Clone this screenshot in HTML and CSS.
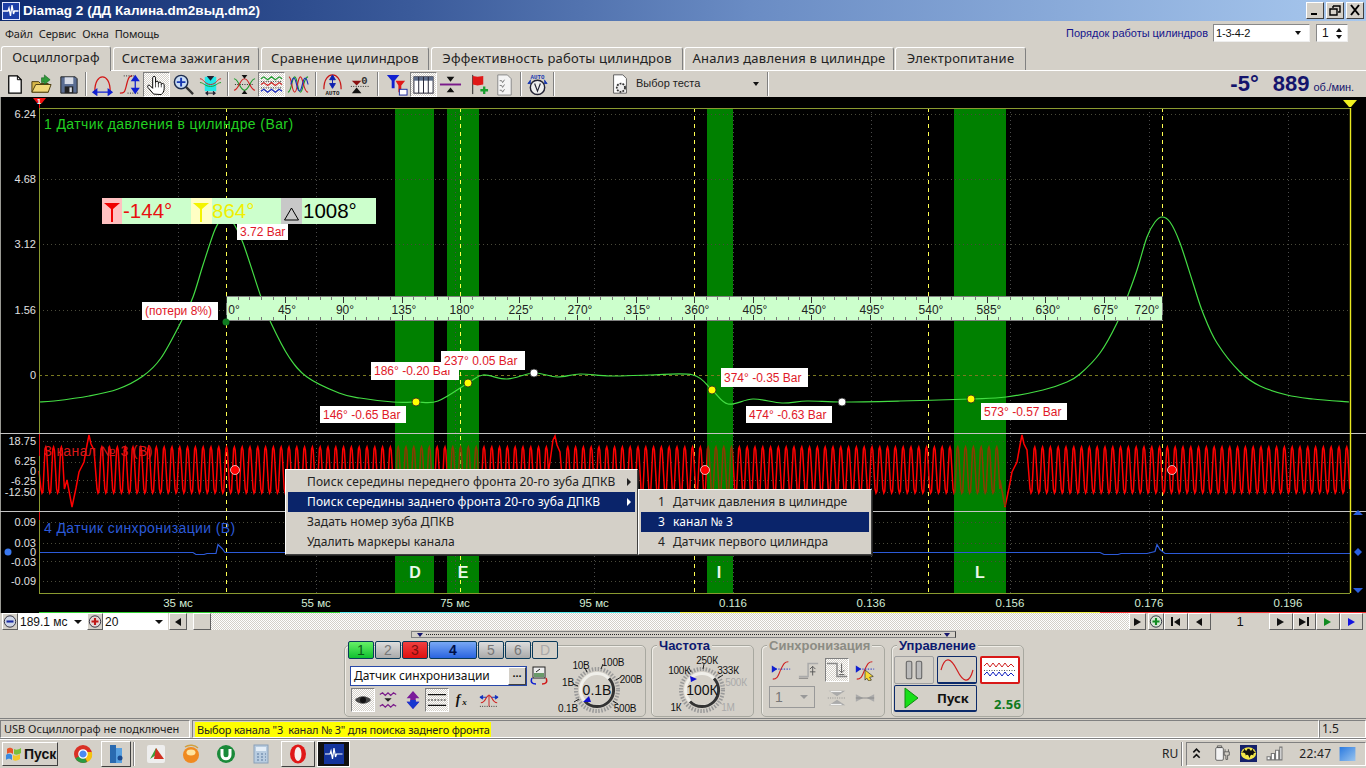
FILE: index.html
```html
<!DOCTYPE html>
<html lang="ru">
<head>
<meta charset="utf-8">
<title>Diamag 2</title>
<link rel="stylesheet" href="styles.css">
</head>
<body>
<div class="app">
  <header class="titlebar">
    <svg class="app-icon" viewBox="0 0 18 18"><rect width="18" height="18" fill="#1c3fa8"/><rect x=".5" y=".5" width="17" height="17" fill="none" stroke="#dfe6ff"/><path d="M1 9h5l1-3 1.500 8 1.500-11 1.500 9 1-3h4" fill="none" stroke="#fff" stroke-width="1.300"/></svg>
    <span class="title-text">Diamag 2 (ДД Калина.dm2выд.dm2)</span>
    <div class="win-btns">
      <span class="win-btn"><svg viewBox="0 0 16 14"><rect x="4" y="10" width="6" height="2"/></svg></span>
      <span class="win-btn"><svg viewBox="0 0 16 14"><path d="M6 3h7v6h-2M3 6h7v6H3z M6 3v2" fill="none" stroke="#000" stroke-width="1.400"/></svg></span>
      <span class="win-btn"><svg viewBox="0 0 16 14"><path d="M4 2l8 10M12 2l-8 10" stroke="#000" stroke-width="2"/></svg></span>
    </div>
  </header>

  <div class="menubar">
    <nav class="menu-items"><span>Файл</span><span>Сервис</span><span>Окна</span><span>Помощь</span></nav>
    <div class="order">
      <span class="order-label">Порядок работы цилиндров</span>
      <span class="combo combo-order">1-3-4-2<i class="arrow"></i></span>
      <span class="combo combo-spin">1<span class="spin"><i class="up"></i><i class="down"></i></span></span>
    </div>
  </div>

  <div class="tabs">
    <span class="tab tab-active">Осциллограф</span>
    <span class="tab tab-a">Система зажигания</span>
    <span class="tab tab-b">Сравнение цилиндров</span>
    <span class="tab tab-c">Эффективность работы цилиндров</span>
    <span class="tab tab-d">Анализ давления в цилиндре</span>
    <span class="tab tab-e">Электропитание</span>
  </div>

  <div class="toolbar">
    <span class="tb"><svg viewBox="0 0 24 24"><path d="M6 3h9l4 4v14H6z" fill="#fff" stroke="#000" stroke-width="1.300"/><path d="M15 3v4h4" fill="none" stroke="#000"/></svg></span>
    <span class="tb"><svg viewBox="0 0 24 24"><path d="M2 9h7l2 2h8v9H2z" fill="#d8b84a" stroke="#4a3c10"/><path d="M2 20l4-8h16l-3 8z" fill="#f2d97a" stroke="#4a3c10"/><path d="M12 10V5h3V2l6 5-6 5V9h-1v1z" fill="#2f9a3a" stroke="#14601c" stroke-width=".6"/></svg></span>
    <span class="tb"><svg viewBox="0 0 24 24"><path d="M4 4h15l2 2v15H4z" fill="#5a6d92" stroke="#222"/><rect x="8" y="4.500" width="9" height="7" fill="#d8dce6"/><rect x="8" y="14" width="9" height="7" fill="#222"/><rect x="13" y="15" width="2.500" height="5" fill="#d8dce6"/></svg></span>
    <i class="sep sep7"></i>
    <span class="tb"><svg viewBox="0 0 24 24"><path d="M4 19C4 9 8 4 12 4s8 5 8 15" fill="none" stroke="#d21818" stroke-width="1.300"/><path d="M2 20h20M2 20l4-3v6zM22 20l-4-3v6z" stroke="#1020d0" fill="#1020d0" stroke-width="1.300"/></svg></span>
    <span class="tb"><svg viewBox="0 0 24 24"><path d="M2 21c5 0 5-1 7-9s3-9 6-9" fill="none" stroke="#d21818" stroke-width="1.300"/><path d="M6 3h12M10 21h12" stroke="#222" stroke-dasharray="1 1.500"/><path d="M18 3v18M18 3l-3.500 5h7zM18 21l-3.500-5h7z" stroke="#1020d0" fill="#1020d0" stroke-width="1.300"/></svg></span>
    <span class="tb tb-pressed"><svg viewBox="0 0 24 24"><path d="M9 22l-6-7c-1-2 1-3 2-2l3 3V5c0-2 3-2 3 0v5c0-2 3-2 3 0v1c0-2 3-2 3 0v1c0-1.500 3-1.500 3 .5v4c0 3-2 5-3 6z" fill="#fff" stroke="#000"/><path d="M11 10v5M14 11v4M17 12v3" stroke="#000" stroke-width=".7"/></svg></span>
    <span class="tb"><svg viewBox="0 0 24 24"><path d="M14 14l8 8" stroke="#333" stroke-width="2.400"/><circle cx="9.500" cy="9.500" r="7" fill="#c8dcf4" stroke="#1c2c50" stroke-width="1.500"/><path d="M9.500 5v9M5 9.500h9" stroke="#1838b0" stroke-width="2"/></svg></span>
    <span class="tb"><svg viewBox="0 0 24 24"><rect x="6" y="4" width="12" height="15" fill="#22e8e8"/><path d="M1 6c4 0 5 6 11 6s7-6 11-6" fill="none" stroke="#d02020"/><path d="M1 10c4 0 5 4 11 4s7-4 11-4" fill="none" stroke="#1a9a2a"/><path d="M8 3h8l-4 5z" fill="#223"/><path d="M7 21h10M7 21l2-2v4zM17 21l-2-2v4z" stroke="#223" fill="#223"/></svg></span>
    <i class="sep sep7"></i>
    <span class="tb"><svg viewBox="0 0 24 24"><path d="M1 6c5 0 6 12 11 12s6-12 11-12" fill="none" stroke="#1a9a2a" stroke-width="1.200"/><path d="M1 18c5 0 6-12 11-12s6 12 11 12" fill="none" stroke="#d02020" stroke-width="1.200"/><path d="M2 12h20" stroke="#222" stroke-dasharray="1 1.500"/><path d="M9 2h6l-3 4zM9 22h6l-3-4z" fill="#111"/></svg></span>
    <span class="tb tb-pressed"><svg viewBox="0 0 24 24" fill="none"><path d="M1 6l3-2 4 3 4-3 4 3 4-3 3 2" stroke="#1a9a2a" stroke-width="1.200"/><path d="M1 12l3-2 4 3 4-3 4 3 4-3 3 2" stroke="#d02020" stroke-width="1.200"/><path d="M1 19l3-2 4 3 4-3 4 3 4-3 3 2" stroke="#1828c0" stroke-width="1.200"/><path d="M1 9h22M1 15.500h22" stroke="#222" stroke-dasharray="1 1.500"/></svg></span>
    <span class="tb"><svg viewBox="0 0 24 24" fill="none"><path d="M1 20C5 20 5 4 8 4s3 16 6 16 3-16 8-16" stroke="#1a9a2a" stroke-width="1.200"/><path d="M2 4c3 0 3 16 6 16s3-16 6-16 3 16 8 16" stroke="#d02020" stroke-width="1.200"/><path d="M4 12c2-9 4-9 6 0s4 9 6 0 4-9 6 0" stroke="#1828c0" stroke-width="1.200"/></svg></span>
    <i class="sep sep7"></i>
    <span class="tb"><svg viewBox="0 0 24 24"><path d="M3 17C3 6 8 2 12 2s9 4 9 15" fill="none" stroke="#c81818" stroke-width="1.300"/><path d="M12 3v12M12 2L9 7h6zM12 16l-3-5h6z" stroke="#1020b0" fill="#1020b0"/><text class="ico-text" x="12" y="22.500">AUTO</text></svg></span>
    <span class="tb"><svg viewBox="0 0 24 24"><text class="ico-zero" x="17" y="11">0</text><path d="M3 14h19" stroke="#222" stroke-dasharray="1 1.500"/><path d="M4 8h10l-5 5z" fill="#8a1010"/><path d="M4 21h10l-5-6z" fill="#111"/></svg></span>
    <i class="sep sep10"></i>
    <span class="tb"><svg viewBox="0 0 24 24"><path d="M2 2h13l-5 6v8H7V8z" fill="#1020d0"/><path d="M11 8h10l-4 5v7h-3v-7z" fill="#e01818"/><rect x="15" y="17" width="8" height="6" fill="#fff" stroke="#1828a0"/></svg></span>
    <span class="tb tb-pressed"><svg viewBox="0 0 24 24"><rect x="2" y="4" width="20" height="17" fill="#fff" stroke="#223"/><rect x="2" y="4" width="20" height="4" fill="#5a6a88"/><path d="M7 4v17M12 4v17M17 4v17" stroke="#223"/></svg></span>
    <span class="tb"><svg viewBox="0 0 24 24"><path d="M1 12h22" stroke="#7a1a8a" stroke-width="2"/><path d="M8 4h8l-4 5zM8 20h8l-4-5z" fill="#111"/></svg></span>
    <span class="tb"><svg viewBox="0 0 24 24"><path d="M7 2v20" stroke="#222"/><path d="M7 3l5 1 6-1v9l-6 1-5-1z" fill="#e01818"/><path d="M15 18h8M19 14v8" stroke="#18a030" stroke-width="2.400"/></svg></span>
    <span class="tb"><svg viewBox="0 0 24 24"><path d="M5 2h10l4 4v17H5z" fill="#f4f4f4" stroke="#888"/><path d="M7 8h2l1 2 2-3M7 13h2l1 2 2-3M7 18h2l1 2 2-3" fill="none" stroke="#777"/></svg></span>
    <i class="sep sep6"></i>
    <span class="tb"><svg viewBox="0 0 24 24"><text class="ico-text ico-blue" x="12" y="6">AUTO</text><path d="M5 7L2 11h3M19 7l3 4h-3" fill="#1838b0" stroke="#1838b0"/><circle cx="12" cy="15" r="7.500" fill="#eee" stroke="#223" stroke-width="1.500"/><path d="M9 11l3 8 3-8" fill="none" stroke="#223" stroke-width="1.200"/></svg></span>
    <i class="sep sep5"></i>
    <span class="test-pick">
      <svg viewBox="0 0 24 24"><path d="M5 2h10l4 4v16H5z" fill="#fff" stroke="#555"/><circle cx="13" cy="16" r="4.500" fill="#eee" stroke="#333" stroke-width="2" stroke-dasharray="2 1.200"/></svg>
      <span class="test-label">Выбор теста</span>
      <i class="arrow"></i>
    </span>
    <i class="sep"></i>
    <div class="rpm"><b class="rpm-big">-5°</b><b class="rpm-big rpm-val">889</b><span class="rpm-unit">об./мин.</span></div>
  </div>

  <main class="plot-wrap">
    <svg class="plot" viewBox="0 97 1366 516" width="1366" height="516">
      <rect x="0" y="97" width="1366" height="516" fill="#000"/>
      <rect x="0" y="97" width="1" height="516" fill="#9a9a94"/>
      <g id="bands" fill="#008000"><rect x="395" y="108" width="39" height="485"/><rect x="447" y="108" width="32" height="485"/><rect x="707" y="108" width="26" height="485"/><rect x="954" y="108" width="52" height="485"/></g>
      <g id="grid"></g>
      <g id="markers"></g>
      <path id="curve" fill="none" stroke="#44dd44" stroke-width="1.200"/>
      <path id="wave" fill="none" stroke="#ff0000" stroke-width="1.500"/>
      <g fill="#008000" opacity=".45"><rect x="395" y="441" width="39" height="65"/><rect x="447" y="441" width="32" height="65"/><rect x="707" y="441" width="26" height="65"/><rect x="954" y="441" width="52" height="65"/></g>
      <path d="M39 552.500H193l3 2h8l3-1h9l2-9 4 4 3 4H1100l4 2h14l3-1h26l8-2 2-7 3 5 5 4H1350" fill="none" stroke="#2c5ad8" stroke-width="1.200"/>

      <g class="frame">
        <path d="M39 108.500H1350M39 593.500H1350M39.500 108V593" stroke="#8a9a30"/>
        <path d="M39.500 433V456M39.500 511V520" stroke="#e01010"/>
        <path d="M0 433.500H1366M0 511.500H1366" stroke="#c4c4c4"/>
        <path d="M1350.500 108V593" stroke="#e8e820" stroke-width="1.400"/>
      </g>
      <path d="M33 98h13l-4 5h-2v5h-1v-5h-2z" fill="#f01010"/><text class="tiny-w" x="39" y="104">1</text>
      <path d="M1343 100h14l-6 7h-2z" fill="#f0f020"/>

      <g class="ax">
        <text x="36" y="118">6.24</text><text x="36" y="183">4.68</text><text x="36" y="248">3.12</text><text x="36" y="314">1.56</text><text x="36" y="379">0</text>
        <text x="36" y="445">18.75</text><text x="36" y="465">6.25</text><text x="36" y="475">0</text><text x="36" y="485">-6.25</text><text x="36" y="496">-12.50</text>
        <text x="36" y="526">0.09</text><text x="36" y="547">0.03</text><text x="36" y="556">0</text><text x="36" y="566">-0.03</text><text x="36" y="585">-0.09</text>
      </g>
      <g class="time">
        <text x="178" y="607">35 мс</text><text x="316" y="607">55 мс</text><text x="455" y="607">75 мс</text><text x="594" y="607">95 мс</text><text x="733" y="607">0.116</text><text x="871" y="607">0.136</text><text x="1010" y="607">0.156</text><text x="1149" y="607">0.176</text><text x="1288" y="607">0.196</text>
      </g>
      <rect x="39" y="612" width="301" height="1" fill="#30d030"/><rect x="340" y="612" width="340" height="1" fill="#50e8e8"/><rect x="680" y="612" width="420" height="1" fill="#f0f040"/><rect x="1100" y="612" width="266" height="1" fill="#f03030"/>

      <text class="ch-label ch-green" x="44" y="129">1 Датчик давления в цилиндре (Bar)</text>
      <text class="ch-label ch-red" x="44" y="456">3 канал № 3 (В)</text>
      <text class="ch-label ch-blue" x="44" y="533">4 Датчик синхронизации (В)</text>

      <g class="band-letters"><text x="415" y="578">D</text><text x="463" y="578">E</text><text x="719" y="578">I</text><text x="980" y="578">L</text></g>

      <g id="ruler">
        <rect x="226.500" y="296.500" width="936" height="24" fill="#ccffcc" stroke="#808080"/>
        <g id="ticks"></g>
        <g class="deg">
          <text x="234" y="314">0°</text><text x="287" y="314">45°</text><text x="345" y="314">90°</text><text x="404" y="314">135°</text><text x="462" y="314">180°</text><text x="521" y="314">225°</text><text x="580" y="314">270°</text><text x="638" y="314">315°</text><text x="697" y="314">360°</text><text x="755" y="314">405°</text><text x="814" y="314">450°</text><text x="872" y="314">495°</text><text x="931" y="314">540°</text><text x="989" y="314">585°</text><text x="1048" y="314">630°</text><text x="1106" y="314">675°</text><text x="1147" y="314">720°</text>
        </g>
      </g>

      <g class="dots">
        <circle cx="226" cy="322" r="3.500" fill="#0f7a20"/>
        <g stroke="#222" stroke-width=".8">
          <circle cx="416" cy="402" r="4" fill="#ffff00"/><circle cx="468" cy="383" r="4" fill="#ffff00"/><circle cx="712" cy="390" r="4" fill="#ffff00"/><circle cx="971" cy="399" r="4" fill="#ffff00"/>
          <circle cx="534" cy="373" r="4" fill="#fff"/><circle cx="842" cy="402" r="4" fill="#fff"/>
        </g>
        <g stroke="#fff" stroke-width=".7">
          <circle cx="235" cy="470" r="4.500" fill="#ff0000"/><circle cx="705" cy="470" r="4.500" fill="#ff0000"/><circle cx="1172" cy="470" r="4.500" fill="#ff0000"/>
        </g>
        <circle cx="8" cy="552" r="3.500" fill="#3a78f0"/>
        <path d="M1358 548l4 4-4 4-4-4zM1353 515l5-5 5 5zM1353 588l5 5 5-5z" fill="#2a60e0"/>
      </g>

      <g class="label">
        <rect x="237" y="224" width="51" height="16"/><text x="240" y="236">3.72 Bar</text>
        <rect x="142" y="302" width="76" height="18"/><text x="145" y="315">(потери 8%)</text>
        <rect x="320" y="406" width="86" height="17"/><text x="323" y="419">146° -0.65 Bar</text>
        <rect x="371" y="362" width="88" height="18"/><text x="374" y="375">186° -0.20 Bar</text>
        <rect x="441" y="351" width="84" height="19"/><text x="444" y="365">237° 0.05 Bar</text>
        <rect x="721" y="368" width="87" height="19"/><text x="724" y="382">374° -0.35 Bar</text>
        <rect x="746" y="406" width="86" height="17"/><text x="749" y="419">474° -0.63 Bar</text>
        <rect x="981" y="403" width="86" height="17"/><text x="984" y="416">573° -0.57 Bar</text>
      </g>

      <g class="info">
        <rect x="102" y="198" width="274" height="26" fill="#ccffcc"/>
        <rect x="102" y="198" width="20" height="26" fill="#ffc0c0"/>
        <rect x="191" y="198" width="21" height="26" fill="#ffffc4"/>
        <rect x="281" y="198" width="21" height="26" fill="#c8c8c8"/>
        <path d="M104 203h16l-7 6v13h-2v-13z" fill="#f00000"/>
        <path d="M193 203h16l-7 6v13h-2v-13z" fill="#f4f400"/>
        <path d="M291.500 208l7 12h-14z" fill="none" stroke="#000"/>
        <text class="i-red" x="123" y="218">-144°</text>
        <text class="i-yel" x="212" y="218">864°</text>
        <text class="i-blk" x="303" y="218">1008°</text>
      </g>
    </svg>

    <div class="popup popup-main">
      <div class="pop-item"><span>Поиск середины переднего фронта 20-го зуба ДПКВ</span><i class="caret"></i></div>
      <div class="pop-item pop-sel"><span>Поиск середины заднего фронта 20-го зуба ДПКВ</span><i class="caret"></i></div>
      <div class="pop-item"><span>Задать номер зуба ДПКВ</span></div>
      <div class="pop-item"><span>Удалить маркеры канала</span></div>
    </div>
    <div class="popup popup-sub">
      <div class="pop-item"><span><em>1</em>Датчик давления в цилиндре</span></div>
      <div class="pop-item pop-sel"><span><em>3</em>канал № 3</span></div>
      <div class="pop-item"><span><em>4</em>Датчик первого цилиндра</span></div>
    </div>
  </main>

  <div class="scrollrow">
    <span class="round-btn"><svg viewBox="0 0 16 16"><circle cx="8" cy="8" r="6.500" fill="#cfd6e6" stroke="#223"/><path d="M4 8h8" stroke="#1828a0" stroke-width="2.400"/></svg></span>
    <span class="sel sel-ms">189.1 мс<i class="arrow"></i></span>
    <span class="round-btn"><svg viewBox="0 0 16 16"><circle cx="8" cy="8" r="6.500" fill="#e6d6d6" stroke="#223"/><path d="M4 8h8M8 4v8" stroke="#c01818" stroke-width="2.400"/></svg></span>
    <span class="sel sel-n">20<i class="arrow"></i></span>
    <span class="sbtn sbtn-l"><i class="tri-l"></i></span>
    <span class="gap-plain"></span>
    <span class="sbtn sbtn-thumb"></span>
    <span class="track"></span>
    <span class="sbtn sbtn-r"><i class="tri-r"></i></span>
    <span class="round-btn round-g"><svg viewBox="0 0 16 16"><circle cx="8" cy="8" r="6.500" fill="#d4e6d4" stroke="#223"/><path d="M4 8h8M8 4v8" stroke="#108a20" stroke-width="2.400"/></svg></span>
    <span class="nbtn"><b class="bar-l"></b><i class="tri-l"></i></span>
    <span class="nbtn"><i class="tri-l"></i></span>
    <span class="page">1</span>
    <span class="nbtn"><i class="tri-r"></i></span>
    <span class="nbtn"><i class="tri-r"></i><b class="bar-r"></b></span>
    <span class="nbtn"><i class="tri-r tri-green"></i></span>
    <span class="nbtn"><i class="tri-r tri-blue"></i></span>
  </div>

  <section class="panel">
    <div class="splitter"><i class="tri-d"></i><span class="dots-line"></span><i class="tri-d"></i></div>
    <div class="groups">
      <div class="group g-chan">
        <div class="chan-col">
          <div class="chan-row">
            <span class="ch ch-on-g">1</span><span class="ch ch-off">2</span><span class="ch ch-on-r">3</span><span class="ch ch-wide">4</span><span class="ch ch-off">5</span><span class="ch ch-off">6</span><span class="ch ch-dis">D</span>
          </div>
          <div class="name-row">
            <span class="name-box">Датчик синхронизации<span class="dots-btn">...</span></span>
            <svg class="ic20" viewBox="0 0 20 20"><rect x="4" y="1" width="12" height="11" fill="#eee" stroke="#222"/><rect x="5" y="7" width="10" height="4" fill="#6a9a6a"/><path d="M7 6l4-3" stroke="#222"/><path d="M3 12c-2 4 0 6 4 6" fill="none" stroke="#1020d0" stroke-width="1.400"/><path d="M17 12c2 4 0 6-4 6" fill="none" stroke="#d01818" stroke-width="1.400"/></svg>
          </div>
          <div class="icon-row">
            <span class="pb tb-pressed"><svg viewBox="0 0 20 20"><path d="M2 10c4-5 12-5 16 0-4 5-12 5-16 0z" fill="#444"/><circle cx="10" cy="10" r="3" fill="#111"/></svg></span>
            <span class="pb pb-f"><svg viewBox="0 0 22 22" fill="none"><path d="M2 5l3-2 3 3 3-3 3 3 3-3 3 2M2 18l3-2 3 3 3-3 3 3 3-3 3 2" stroke="#7a1a8a" stroke-width="1.300"/><path d="M7 9h8l-4 4z" fill="#222"/></svg></span>
            <span class="pb pb-f"><svg viewBox="0 0 22 22"><path d="M11 1l7 8h-4v4h4l-7 8-7-8h4V9H4z" fill="#7a1a9a"/><path d="M11 21l-7-8h4v-2h6v2h4z" fill="#1838d0"/></svg></span>
            <span class="pb tb-pressed"><svg viewBox="0 0 22 22"><path d="M1 5h20M1 17h20" stroke="#111" stroke-width="1.400"/><path d="M1 11h20" stroke="#111" stroke-dasharray="2 1.500"/></svg></span>
            <span class="pb pb-f pb-sp"><svg viewBox="0 0 22 22"><text class="fx" x="2" y="15">f</text><text class="fx fx2" x="9" y="16">x</text></svg></span>
            <span class="pb pb-f"><svg viewBox="0 0 22 22" fill="none"><path d="M2 14c6 0 5-8 9-8s3 8 9 8" stroke="#d02020" stroke-width="1.200"/><path d="M1 8h7M14 8h7M1 8l3-2v4zM21 8l-3-2v4z" stroke="#1030c0" fill="#1030c0"/><path d="M1 18h20" stroke="#222" stroke-dasharray="1 1.500"/><path d="M11 5v13" stroke="#d02020"/></svg></span>
          </div>
        </div>
        <svg class="knob" viewBox="547 645 100 72">
          <circle cx="597" cy="690" r="21" fill="none" stroke="#999" stroke-width="4" stroke-dasharray="1.500 1.500"/>
          <circle cx="597" cy="690" r="16.500" fill="none" stroke="#f0efea" stroke-width="3"/>
          <path d="M609 678.500A16.500 16.500 0 0 1 585 701.500" fill="none" stroke="#333" stroke-width="3"/>
          <path d="M574 702l5-3M573 684l5 2M585 668l2 4M603 664l-2 5M621 677l-5 3M618 704l-5-3" stroke="#222"/>
          <path d="M583 702l6-6 2 6z" fill="#1010d0"/>
          <text class="kb" x="597" y="695">0.1В</text>
          <g class="ks"><text x="568" y="712">0.1В</text><text x="568" y="686">1В</text><text x="581" y="669">10В</text><text x="613" y="666">100В</text><text x="631" y="683">200В</text><text x="625" y="712">500В</text></g>
        </svg>
      </div>

      <div class="group g-freq">
        <span class="g-title">Частота</span>
        <svg class="knob" viewBox="651 645 102 72">
          <circle cx="701" cy="690" r="21" fill="none" stroke="#999" stroke-width="4" stroke-dasharray="1.500 1.500"/>
          <circle cx="701" cy="690" r="16.500" fill="none" stroke="#f0efea" stroke-width="3"/>
          <path d="M713 678.500A16.500 16.500 0 0 1 689 701.500" fill="none" stroke="#333" stroke-width="3"/>
          <path d="M688 668l2 4M703 664l-1 5M722 675l-5 3" stroke="#222"/>
          <path d="M724 685l-5 1M721 704l-5-3" stroke="#aaa"/>
          <path d="M689 676l7 3-6 3z" fill="#1010d0"/>
          <text class="kb" x="701" y="695">100К</text>
          <g class="ks"><text x="678" y="674">100К</text><text x="706" y="664">250К</text><text x="727" y="674">333К</text><text class="ks-off" x="735" y="686">500К</text><text class="ks-off" x="727" y="711">1М</text><text x="675" y="711">1К</text></g>
        </svg>
      </div>

      <div class="group g-sync">
        <span class="g-title g-title-off">Синхронизация</span>
        <div class="sync-grid">
          <span class="sy"><svg viewBox="0 0 24 24" fill="none"><path d="M3 22c6 0 6-5 9-11s4-8 8-8" stroke="#d02020" stroke-width="1.200"/><path d="M3 11h19" stroke="#1020d0" stroke-dasharray="1.500 1.500"/><path d="M2 7l6 4-6 4z" fill="#1020d0"/></svg></span>
          <span class="sy"><svg viewBox="0 0 24 24" fill="none"><path d="M1 19h10V5h11" stroke="#aaa" stroke-width="1.600"/><path d="M1 21h10" stroke="#777"/><path d="M16 8v10M13 11l3-3 3 3" stroke="#555"/><path d="M13 14h6" stroke="#555"/></svg></span>
          <span class="sy tb-pressed"><svg viewBox="0 0 24 24" fill="none"><path d="M1 5h11v14h11" stroke="#888" stroke-width="1.600"/><path d="M17 5v10M14 12l3 3 3-3M14 17h6" stroke="#555"/></svg></span>
          <span class="sy"><svg viewBox="0 0 24 24" fill="none"><path d="M3 22c6 0 6-5 9-11s4-8 8-8" stroke="#d02020" stroke-width="1.200"/><path d="M3 11h19" stroke="#1020d0" stroke-dasharray="1.500 1.500"/><path d="M2 7l6 4-6 4z" fill="#1020d0"/><path d="M12 12l9 7-4 1 2 3-3 1-2-3-2 2z" fill="#f8d830" stroke="#222" stroke-width=".7"/></svg></span>
          <span class="sy-combo">1<i class="arrow arrow-off"></i></span>
          <span class="sy sy-last"><svg viewBox="0 0 24 24"><path d="M2 12h20" stroke="#888" stroke-dasharray="1 1.500"/><path d="M3 4h18l-9 6zM3 20h18l-9-6z" fill="#aaa"/><path d="M5 5h12M5 19h12" stroke="#fff"/></svg></span>
          <span class="sy"><svg viewBox="0 0 24 24"><path d="M2 8l8 4-8 4zM22 8l-8 4 8 4z" fill="#aaa"/><path d="M2 12h20" stroke="#888"/></svg></span>
        </div>
      </div>

      <div class="group g-ctrl">
        <span class="g-title">Управление</span>
        <div class="ctrl-top">
          <span class="cb cb-flat"><svg viewBox="0 0 30 20"><rect x="8" y="2" width="5" height="16" rx="1.500" fill="#bbb" stroke="#666"/><rect x="17" y="2" width="5" height="16" rx="1.500" fill="#bbb" stroke="#666"/></svg></span>
          <span class="cb cb-blue"><svg viewBox="0 0 36 22"><path d="M2 11C6-4 12-1 18 11s12 15 16 0" fill="none" stroke="#d02020" stroke-width="1.200"/></svg></span>
          <span class="cb cb-red"><svg viewBox="0 0 36 22" fill="none"><path d="M2 7l3-3 3 4 3-4 3 4 3-4 3 4 3-4 3 4 3-3 3 3" stroke="#d02020"/><path d="M2 16l3-3 3 4 3-4 3 4 3-4 3 4 3-4 3 4 3-3 3 3" stroke="#1020c0"/><path d="M2 11.500h32" stroke="#555" stroke-dasharray="1 1.500"/></svg></span>
        </div>
        <div class="ctrl-bot">
          <span class="start"><svg viewBox="0 0 16 24"><path d="M2 2l13 10L2 22z" fill="#18e018" stroke="#108a10"/></svg><b>Пуск</b></span>
          <b class="time-val">2.56</b>
        </div>
      </div>
    </div>
  </section>

  <footer class="status">
    <span class="st st-a">USB Осциллограф не подключен</span>
    <span class="st st-b"><mark class="hl">Выбор канала "3&nbsp; канал № 3" для поиска заднего фронта</mark></span>
    <span class="st st-c">1.5</span>
  </footer>

  <div class="taskbar">
    <span class="start-btn"><svg viewBox="0 0 18 18"><path d="M2 4c3-2 4-1 6 0v5c-2-1-3-2-6 0z" fill="#e8562a"/><path d="M9 4c2 1 4 1 7-1v5c-3 2-5 2-7 1z" fill="#7cc03a"/><path d="M1 10c3-2 4-1 6 0v5c-2-1-3-2-6 0z" fill="#3a8ae0"/><path d="M8 10c2 1 4 1 7-1v5c-3 2-5 2-7 1z" fill="#f4c82a"/></svg><b>Пуск</b></span>
    <span class="tk tk-chrome"><svg viewBox="0 0 20 20"><circle cx="10" cy="10" r="9" fill="#d93025"/><path d="M10 10L2.200 14.500A9 9 0 0 0 14 18z" fill="#2a9a42"/><path d="M10 10l4.500 8A9 9 0 0 0 18.800 8H10z" fill="#f4c20d"/><circle cx="10" cy="10" r="4.200" fill="#4a8af0" stroke="#fff" stroke-width="1.200"/></svg></span>
    <span class="tk tk-press tk-w30"><svg viewBox="0 0 20 20"><path d="M4 1h6v18H4z" fill="#2a6ab0"/><path d="M10 4h6v15h-6z" fill="#58a0e0"/><circle cx="14" cy="14" r="2.500" fill="#1a4a90"/></svg></span>
    <i class="tk-sep"></i>
    <span class="tk tk-a"><svg viewBox="0 0 20 20"><rect x="1" y="1" width="18" height="18" rx="2" fill="#eee"/><path d="M4 15L10 4l3 5z" fill="#3aa03a"/><path d="M10 4l8 11H8z" fill="#d03020"/></svg></span>
    <span class="tk tk-b"><svg viewBox="0 0 20 20"><circle cx="10" cy="11" r="8" fill="#f08a20"/><ellipse cx="10" cy="8.500" rx="4.500" ry="3" fill="#ffe4a0"/><path d="M4 3c4-3 10-2 13 1" fill="none" stroke="#d0a040" stroke-width="1.500"/></svg></span>
    <span class="tk tk-b"><svg viewBox="0 0 20 20"><circle cx="10" cy="10" r="9" fill="#1a8a3a"/><path d="M6 5v6c0 5 8 5 8 0V5" fill="none" stroke="#fff" stroke-width="3"/></svg></span>
    <span class="tk tk-b"><svg viewBox="0 0 20 20"><rect x="3" y="1" width="14" height="18" fill="#b8cce0" stroke="#8aa0b8"/><rect x="5" y="3" width="10" height="4" fill="#e4eef8"/><path d="M6 10h2M10 10h2M14 10h1M6 13h2M10 13h2M14 13h1M6 16h2M10 16h2M14 16h1" stroke="#7a94b4" stroke-width="1.600"/></svg></span>
    <span class="tk tk-press tk-w34"><svg viewBox="0 0 20 20"><ellipse cx="10" cy="10" rx="8" ry="9.500" fill="#e01818"/><ellipse cx="10" cy="10" rx="3.500" ry="7" fill="#f6f0ee"/></svg></span>
    <span class="tk tk-active"><svg viewBox="0 0 20 20"><rect width="20" height="20" fill="#14349c"/><path d="M1 10h5l1-3 1.500 8 1.500-11 1.500 9 1-3h6" fill="none" stroke="#fff" stroke-width="1.200"/></svg></span>
    <span class="tray-lang">RU</span>
    <i class="tray-sep"></i>
    <div class="tray">
      <svg class="tray-ic" viewBox="0 0 16 16" fill="none"><path d="M5 7l3-3 3 3M5 12l3-3 3 3" stroke="#111" stroke-width="1.500"/></svg>
      <svg class="tray-ic" viewBox="0 0 18 20" fill="none"><rect x="1" y="3" width="9" height="15" rx="1.500" stroke="#555" fill="#f2f2f2"/><path d="M3 1h5v2H3zM11 8h6v4h-2v5h-2v-5h-2zM12 8V5M16 8V5" stroke="#555"/></svg>
      <svg class="tray-ic" viewBox="0 0 18 18"><rect width="18" height="18" fill="#14206a"/><ellipse cx="9" cy="9" rx="8" ry="6.500" fill="#f4e84a"/><path d="M1 8c3-1 3-3 4-4 0 2 2 2 2 2l1-2h2l1 2s2 0 2-2c1 1 1 3 4 4-2 0-3 1-3 3-1-1-2-1-3 0l-1 3-1-3c-1-1-2-1-3 0 0-2-1-3-3-3z" fill="#111"/></svg>
      <svg class="tray-ic" viewBox="0 0 16 16"><path d="M1 14V11h3v3zM5 14V8h3v6zM9 14V5h3v9zM13 14V2h2v12z" fill="#fff" stroke="#777"/></svg>
      <span class="clock">22:47</span>
      <svg class="tray-desk" viewBox="0 0 17 15"><defs><linearGradient id="desk" x1="0" y1="0" x2="1" y2="1"><stop offset="0" stop-color="#2a7ae0"/><stop offset="1" stop-color="#9ac4ee"/></linearGradient></defs><rect width="17" height="15" fill="url(#desk)"/></svg>
    </div>
  </div>
</div>
<script src="app.js"></script>
</body>
</html>
```

FILE: styles.css
```css
* { box-sizing: border-box; }
html, body { margin: 0; padding: 0; }
body { background: #d4d0c8; overflow: hidden; }
i { display: block; font-style: normal; }

.app {
  width: 1366px; height: 768px; display: flex; flex-direction: column;
  background: #d4d0c8; color: #111; overflow: hidden;
  font: 12px/16px "Noto Sans", "Liberation Sans", sans-serif;
}

/* title bar */
.titlebar {
  height: 21px; flex: none; display: flex; align-items: center; padding: 0 2px 0 2px;
  background: linear-gradient(90deg, #0e2a6e 0%, #3a5a9a 30%, #6a8cc4 55%, #a8c8ee 100%);
}
.app-icon { width: 18px; height: 18px; }
.title-text { margin-left: 3px; color: #fff; font: bold 13.5px/20px "Liberation Sans", sans-serif; letter-spacing: .05px; }
.win-btns { margin-left: auto; display: flex; gap: 2px; }
.win-btn {
  width: 18px; height: 17px; background: #d4d0c8; display: block;
  border: 1px solid; border-color: #fff #404040 #404040 #fff;
}
.win-btn svg { display: block; width: 16px; height: 14px; }

/* menu row */
.menubar { height: 24px; flex: none; display: flex; align-items: center; padding-left: 5px; }
.menu-items { display: flex; gap: 6px; font-size: 11px; color: #222; margin-top: 2px; letter-spacing: -.15px; }
.order { margin-left: auto; display: flex; align-items: center; margin-right: 18px; }
.order-label { color: #14148c; font: 11px/16px "Liberation Sans", sans-serif; letter-spacing: -.02px; margin-right: 5px; }
.combo { height: 18px; background: #fff; display: flex; align-items: center; position: relative; font: 11px/16px "Liberation Sans", sans-serif; letter-spacing: -.2px; padding-left: 2px; border: 1px solid #888; border-color: #888 #eee #eee #888; }
.combo-order { width: 97px; }
.combo-spin { width: 32px; margin-left: 6px; font-size: 12px; padding-left: 5px; }
.arrow { width: 0; height: 0; border: 3.5px solid transparent; border-top: 4px solid #111; border-bottom: 0; margin-left: auto; margin-right: 8px; }
.spin { margin-left: auto; margin-right: 5px; display: flex; flex-direction: column; gap: 3px; }
.up { width: 0; height: 0; border: 3px solid transparent; border-bottom: 4px solid #111; border-top: 0; }
.down { width: 0; height: 0; border: 3px solid transparent; border-top: 4px solid #111; border-bottom: 0; }

/* tabs */
.tabs { height: 25px; flex: none; display: flex; align-items: flex-end; padding-left: 1px; position: relative; z-index: 1; }
.tab {
  height: 23px; display: flex; align-items: center; justify-content: center; padding-bottom: 3px;
  margin-right: 2px;
  border: 1px solid; border-bottom: 0; border-color: #fff #808080 #808080 #fff; border-radius: 3px 3px 0 0;
  font-size: 13px; line-height: 18px; color: #222; letter-spacing: .25px;
}
.tab-active { width: 110px; height: 25px; background: #d4d0c8; margin-bottom: -1px; letter-spacing: .15px; padding-bottom: 4px; }
.tab-a { width: 146px; }
.tab-b { width: 168px; }
.tab-c { width: 252px; margin-right: 1px; }
.tab-d { width: 210px; margin-right: 1px; }
.tab-e { width: 131px; }

/* toolbar */
.toolbar { height: 27px; flex: none; display: flex; align-items: center; border-top: 1px solid #fff; padding-left: 1px; }
.tb { width: 27px; height: 25px; display: flex; align-items: center; justify-content: center; flex: none; }
.tb svg { width: 23px; height: 23px; }
.tb-pressed {
  background-color: #d4d0c8;
  background-image: conic-gradient(#fff 25%, #d4d0c8 0 50%, #fff 0 75%, #d4d0c8 0);
  background-size: 2px 2px;
  border: 1px solid; border-color: #808080 #fff #fff #808080;
}
.sep { width: 2px; height: 24px; flex: none; background: linear-gradient(90deg, #808080 50%, #fff 50%); margin: 0 2px; }
.sep5 { margin: 0 2px; }
.sep6 { margin: 0 2px; }
.sep7 { margin: 0 2.5px; }
.sep10 { margin: 0 4px; }
.ico-text { font: bold 6px "Liberation Mono", monospace; text-anchor: middle; fill: #222; }
.ico-blue { fill: #1838b0; }
.ico-zero { font: bold 11px "Liberation Mono", monospace; text-anchor: middle; fill: #333; }
.test-pick { width: 208px; height: 25px; display: flex; align-items: center; padding-left: 52px; margin-left: 0; }
.test-pick svg { width: 22px; height: 22px; flex: none; }
.test-label { margin-left: 5px; font: 11px/16px "Liberation Sans", sans-serif; color: #222; margin-top: -2px; }
.test-pick .arrow { margin-right: 6px; }
.rpm { margin-left: auto; display: flex; align-items: baseline; color: #14146c; margin-right: 12px; }
.rpm-big { font: bold 22px/24px "Liberation Sans", sans-serif; }
.rpm-val { margin-left: 14px; }
.rpm-unit { font: 11px/16px "Liberation Sans", sans-serif; margin-left: 4px; color: #14146c; letter-spacing: -.1px; }

/* plot */
.plot-wrap { height: 516px; flex: none; position: relative; background: #000; }
.plot { display: block; }
.ax text { font: 11px "Liberation Sans", sans-serif; fill: #e0e0e0; text-anchor: end; }
.time text { font: 11.5px "Liberation Sans", sans-serif; fill: #d4ecd4; text-anchor: middle; }
.tiny-w { font: bold 8px "Liberation Sans", sans-serif; fill: #fff; text-anchor: middle; }
.ch-label { font: 14px "Liberation Sans", sans-serif; letter-spacing: .4px; }
.ch-green { fill: #22d022; }
.ch-red { fill: #d81818; }
.ch-blue { fill: #2c5ad8; }
.band-letters text { font: bold 16px "Liberation Sans", sans-serif; fill: #eaf8ea; text-anchor: middle; }
.deg text { font: 12px "Liberation Sans", sans-serif; fill: #222; text-anchor: middle; }
.label rect { fill: #fff; }
.label text { font: 12px "Liberation Sans", sans-serif; fill: #e01828; }
.info text { font: 20.5px "Liberation Sans", sans-serif; }
.i-red { fill: #e81010; }
.i-yel { fill: #f0f000; }
.i-blk { fill: #000; }

/* context menus */
.popup {
  position: absolute; background: #d4d0c8; padding: 2px;
  border: 1px solid; border-color: #fff #404040 #404040 #fff;
  box-shadow: 1px 1px 0 #222;
}
.popup-main { left: 285px; top: 372px; width: 353px; }
.popup-sub { left: 638px; top: 392px; width: 234px; }
.pop-item { height: 20px; display: flex; align-items: center; padding-left: 19px; font-size: 12px; color: #222; letter-spacing: .09px; white-space: nowrap; }
.popup-sub .pop-item { padding-left: 17px; }
.pop-item em { font-style: normal; width: 15px; display: inline-block; }
.pop-sel { background: #0a246a; color: #fff; }
.caret { width: 0; height: 0; margin-left: auto; margin-right: 4px; border: 4px solid transparent; border-left: 4px solid #222; border-right: 0; }
.pop-sel .caret { border-left-color: #fff; }

/* scroll row */
.scrollrow { height: 17px; flex: none; display: flex; align-items: stretch; padding-left: 2px; }
.round-btn { width: 16px; background: #d4d0c8; display: block; border: 1px solid; border-color: #fff #606060 #606060 #fff; flex: none; }
.round-btn svg { display: block; width: 14px; height: 15px; }
.sel { background: #fff; display: flex; align-items: center; font: 12px/16px "Liberation Sans", sans-serif; padding-left: 2px; flex: none; }
.sel-ms { width: 69px; }
.sel-n { width: 65px; }
.sel .arrow { border-width: 4px; border-top-width: 4px; margin-right: 5px; }
.sbtn { width: 18px; background: #d4d0c8; display: flex; align-items: center; justify-content: center; border: 1px solid; border-color: #fff #606060 #606060 #fff; flex: none; }
.sbtn-l { margin-left: 1px; }
.gap-plain { width: 6px; flex: none; background: #e4e2dc; }
.sbtn-r { width: 17px; }
.track {
  width: 918px; flex: none;
  background-color: #d4d0c8;
  background-image: conic-gradient(#fff 25%, #d4d0c8 0 50%, #fff 0 75%, #d4d0c8 0);
  background-size: 2px 2px;
}
.round-g { margin-left: 2px; }
.nbtn { width: 23.500px; background: #d4d0c8; display: flex; align-items: center; justify-content: center; border: 1px solid; border-color: #fff #606060 #606060 #fff; flex: none; }
.page { width: 58px; text-align: center; font: 13px/17px "Liberation Sans", sans-serif; flex: none; }
.tri-l { width: 0; height: 0; border: 4.5px solid transparent; border-right: 6px solid #111; border-left: 0; }
.tri-r { width: 0; height: 0; border: 4.5px solid transparent; border-left: 7px solid #111; border-right: 0; }
.tri-green { border-left-color: #108a20; }
.tri-blue { border-left-color: #1414e0; }
.bar-l, .bar-r { display: block; width: 2px; height: 9px; background: #111; }
.bar-l { margin-right: 1px; }
.bar-r { margin-left: 1px; }

/* control panel */
.panel { height: 89px; flex: none; display: flex; flex-direction: column; border-bottom: 1px solid #808080; }
.splitter { height: 7px; width: 545px; margin: 1px 0 0 411px; display: flex; align-items: center; gap: 3px; padding: 0 5px; background: #d4d0c8; border: 1px solid; border-color: #808080 #404040 #808080 #808080; flex: none; }
.tri-d { width: 0; height: 0; border: 3.5px solid transparent; border-top: 4px solid #14146c; border-bottom: 0; }
.dots-line { flex: 1; border-top: 1px dotted #222; }
.groups { display: flex; margin: 7px 0 0 344px; height: 72px; }
.group { position: relative; height: 72px; border: 1px solid #a8a8a0; border-radius: 5px; box-shadow: inset 1px 1px 0 #f0eee8; flex: none; }
.g-title { position: absolute; left: 5px; top: -8px; padding: 0 2px; background: #d4d0c8; font: bold 13px/15px "Liberation Sans", sans-serif; color: #0c1a70; }
.g-title-off { color: #8c8c84; }

.g-chan { width: 302px; display: flex; }
.chan-col { width: 202px; padding-left: 5px; margin-top: -5px; flex: none; }
.chan-row { display: flex; height: 18px; gap: 1px; margin-left: -2px; }
.ch { width: 26px; height: 18px; flex: none; display: flex; align-items: center; justify-content: center; border: 1px solid #0a3a5a; border-radius: 2px; font: 14px/16px "Liberation Sans", sans-serif; color: #666; background: linear-gradient(#ddd, #aaa); }
.ch-on-g { background: linear-gradient(#66f066, #10c030); color: #0a5a1a; }
.ch-on-r { background: linear-gradient(#f04040, #e01010); color: #7a1010; }
.ch-wide { width: 48px; background: linear-gradient(#78a8f4, #2a64e0); color: #00104a; font-weight: bold; }
.ch-off { color: #777; }
.ch-dis { color: #aaa; background: #d4d0c8; }
.name-row { display: flex; align-items: center; margin-top: 7px; height: 20px; }
.name-box { width: 177px; height: 20px; flex: none; background: #fff; border: 1px solid #2848a8; display: flex; align-items: center; font-size: 12px; padding-left: 3px; color: #111; }
.dots-btn { margin-left: auto; width: 18px; height: 18px; background: #d4d0c8; border: 1px solid; border-color: #fff #404040 #404040 #fff; font: bold 11px/10px "Liberation Sans", sans-serif; text-align: center; }
.ic20 { width: 20px; height: 20px; margin-left: 2px; flex: none; }
.icon-row { display: flex; align-items: center; margin-top: 2px; height: 24px; margin-left: 1px; }
.pb { width: 24px; height: 24px; display: flex; align-items: center; justify-content: center; flex: none; }
.pb svg { width: 20px; height: 20px; }
.pb-f { width: 25px; }
.pb-sp { margin-left: 2px; }
.fx { font: italic bold 15px "Liberation Serif", serif; fill: #111; }
.fx2 { font-size: 10px; }
.knob { width: 100px; height: 72px; flex: none; margin-top: -1px; }
.kb { font: 14px "Liberation Sans", sans-serif; text-anchor: middle; fill: #111; }
.ks text { font: 10px "Liberation Sans", sans-serif; text-anchor: middle; fill: #111; letter-spacing: -.2px; }
.ks .ks-off { fill: #aaa; }

.g-freq { width: 103px; margin-left: 5px; }
.g-freq .knob { width: 102px; display: block; }
.g-sync { width: 124px; margin-left: 7px; }
.sync-grid { display: grid; grid-template-columns: 24px 24px 24px 24px; column-gap: 4px; grid-auto-rows: 24px; padding: 12px 0 0 7px; row-gap: 4px; }
.sy { width: 24px; height: 24px; display: flex; align-items: center; justify-content: center; }
.sy svg { width: 22px; height: 22px; }
.sy-combo { grid-column: 1 / span 2; width: 46px; height: 22px; display: flex; align-items: center; padding-left: 5px; border: 1px solid #999; color: #777; font: 14px/16px "Liberation Sans", sans-serif; }
.arrow-off { border-top-color: #999; border-width: 4px; margin-right: 6px; }
.sy-last { grid-column: 3; }
.g-ctrl { width: 133px; margin-left: 6px; padding: 10px 0 0 2px; }
.ctrl-top { display: flex; gap: 3px; }
.cb { width: 40px; height: 28px; display: flex; align-items: center; justify-content: center; border-radius: 2px; }
.cb svg { width: 36px; height: 22px; }
.cb-flat { border: 1px solid #a0a0a0; }
.cb-blue { border: 1px solid #0c2a6a; border-bottom-width: 2px; }
.cb-red { border: 2px solid #d81818; background: #fff; }
.ctrl-bot { display: flex; align-items: flex-end; margin-top: 1px; }
.start { width: 83px; height: 27px; display: flex; align-items: center; border: 1px solid #0c2a6a; border-radius: 2px; border-bottom-width: 2px; padding-left: 8px; }
.start svg { width: 16px; height: 24px; }
.start b { font: bold 13px/16px "Noto Sans", sans-serif; margin-left: 18px; color: #111; }
.time-val { font: bold 13px/15px "Noto Sans", sans-serif; color: #107a20; margin-left: 17px; letter-spacing: .3px; }

/* status bar */
.status { height: 20px; flex: none; display: flex; padding-top: 1px; border-bottom: 1px solid #808080; }
.st { height: 18px; display: flex; align-items: center; border: 1px solid; border-color: #808080 #fff #fff #808080; font-size: 11px; padding-left: 3px; color: #222; white-space: nowrap; }
.st-a { width: 190px; }
.st-b { width: 1127px; margin-left: 2px; padding-left: 2px; }
.st-c { width: 47px; margin-left: 0; padding-left: 2px; font-size: 12px; }
.hl { background: #ffff00; color: #222; padding: 0 1px 0 2px; line-height: 15px; letter-spacing: -.2px; }

/* taskbar */
.taskbar { height: 28px; flex: none; display: flex; align-items: center; border-top: 1px solid #fff; padding-left: 2px; }
.start-btn { width: 56px; height: 24px; display: flex; align-items: center; padding-left: 2px; border: 1px solid; border-color: #fff #404040 #404040 #fff; flex: none; }
.start-btn svg { width: 18px; height: 18px; }
.start-btn b { font: bold 14px/16px "Liberation Sans", sans-serif; margin-left: 1px; }
.tk { height: 26px; display: flex; align-items: center; justify-content: center; flex: none; }
.tk svg { width: 20px; height: 20px; }
.tk-chrome { width: 20px; margin-left: 15px; }
.tk-press { border: 1px solid; border-color: #fff #404040 #404040 #fff; }
.tk-w30 { width: 30px; margin-left: 8px; }
.tk-sep { width: 2px; height: 24px; background: linear-gradient(90deg, #808080 50%, #fff 50%); margin: 0 6px 0 2px; flex: none; }
.tk-a { width: 20px; margin-left: 5px; }
.tk-b { width: 20px; margin-left: 15px; }
.tk-w34 { width: 34px; margin-left: 10px; }
.tk-active { width: 33px; margin-left: 2px; border: 1px solid #fff; background: #111; }
.tray-lang { margin-left: 812px; font-size: 12px; color: #222; }
.tray-sep { width: 2px; height: 24px; margin-left: 3px; background: linear-gradient(90deg, #808080 50%, #fff 50%); flex: none; }
.tray { flex: 1; height: 24px; display: flex; align-items: center; margin-left: 3px; padding-left: 1px; border: 1px solid; border-color: #808080 #fff #fff #808080; }
.tray-ic { width: 17px; height: 17px; flex: none; margin-right: 9px; }
.clock { font-size: 12px; color: #222; letter-spacing: .3px; margin-left: 7px; }
.tray-desk { width: 17px; height: 14px; margin-left: 8px; flex: none; }
```

FILE: app.js
```js
(function () {
  var NS = 'http://www.w3.org/2000/svg';
  function add(parent, d, stroke, dash) {
    var p = document.createElementNS(NS, 'path');
    p.setAttribute('d', d);
    p.setAttribute('stroke', stroke);
    p.setAttribute('fill', 'none');
    if (dash) p.setAttribute('stroke-dasharray', dash);
    parent.appendChild(p);
  }

  /* grid */
  var grid = document.getElementById('grid');
  [178, 316, 455, 594, 733, 871, 1010, 1149, 1288].forEach(function (x) {
    add(grid, 'M' + (x + 0.5) + ' 108V593', '#4a4a4a', '1 3');
  });
  [114, 179, 244, 310, 441, 462, 480, 492, 522, 543, 561, 581].forEach(function (y) {
    add(grid, 'M39 ' + (y + 0.5) + 'H1350', '#4a4a3a', '1 3');
  });
  add(grid, 'M39 375.5H1350', '#7a7a20', '3 3');

  var markers = document.getElementById('markers');
  [226, 460, 694, 928, 1162].forEach(function (x) {
    add(markers, 'M' + (x + 0.5) + ' 108V593', '#ffff50', '4 4');
  });

  /* pressure curve, smoothed through the measured points */
  var pts = [[39,402],[54,401],[89,396],[118,389],[143,376],[161,358],[182,320],[193,297],[203,265],[214,232],[220,221],[226,218],[232,221],[243,243],[261,297],[271,323],[289,357],[307,377],[339,393],[360,398],[393,402],[416,402],[438,401],[468,383],[483,375],[507,379],[534,373],[557,377],[580,374],[610,376],[650,375],[693,375],[712,390],[728,404],[753,399],[782,403],[807,401],[842,402],[900,401],[971,399],[1006,397],[1043,390],[1067,382],[1080,374],[1100,353],[1117,323],[1128,295],[1137,270],[1147,237],[1155,222],[1162,217],[1170,222],[1180,243],[1193,283],[1203,313],[1217,343],[1240,372],[1260,386],[1287,395],[1313,399],[1349,402]];
  var d = 'M' + pts[0][0] + ' ' + pts[0][1];
  for (var i = 0; i < pts.length - 1; i++) {
    var p0 = pts[Math.max(i - 1, 0)], p1 = pts[i], p2 = pts[i + 1], p3 = pts[Math.min(i + 2, pts.length - 1)];
    d += 'C' + (p1[0] + (p2[0] - p0[0]) / 6).toFixed(1) + ' ' + (p1[1] + (p2[1] - p0[1]) / 6).toFixed(1) + ' ' +
      (p2[0] - (p3[0] - p1[0]) / 6).toFixed(1) + ' ' + (p2[1] - (p3[1] - p1[1]) / 6).toFixed(1) + ' ' + p2[0] + ' ' + p2[1];
  }
  document.getElementById('curve').setAttribute('d', d);

  /* crank-sensor signal: 7.8px teeth with the sync signature at each gap */
  var w = 'M39 471', x = 41, period = 7.8;
  var tooth = [[0, 489], [1, 493], [2, 491], [4, 449], [4.8, 447], [5.6, 450], [7.8, 489]];
  function sig(list) { list.forEach(function (p) { w += 'L' + p[0] + ' ' + p[1]; }); }
  var gaps = [
    { at: 66, pts: [[67, 480], [72, 507], [76, 488], [79, 472], [84, 462], [87, 445], [89, 435], [91, 444], [94, 450], [97, 489]], end: 97 },
    { at: 546, pts: [[547, 480], [550, 462], [553, 440], [555, 436], [557, 445], [560, 452], [563, 489]], end: 563 },
    { at: 999, pts: [[1000, 480], [1005, 507], [1009, 488], [1012, 472], [1017, 462], [1020, 445], [1022, 435], [1024, 444], [1027, 450], [1030, 489]], end: 1030 }
  ];
  var g = 0;
  while (x < 1345) {
    if (g < gaps.length && x >= gaps[g].at - 4) {
      sig(gaps[g].pts);
      x = gaps[g].end;
      g++;
      continue;
    }
    for (var t = 0; t < tooth.length; t++) {
      w += 'L' + (x + tooth[t][0]).toFixed(1) + ' ' + tooth[t][1];
    }
    x += period;
  }
  document.getElementById('wave').setAttribute('d', w);

  /* ruler ticks */
  var ticks = document.getElementById('ticks'), minor = '', major = '';
  for (var k = 0; k <= 80; k++) {
    var tx = Math.round(226 + k * 11.7) + 0.5;
    if (k % 5 === 0) major += 'M' + tx + ' 297v6M' + tx + ' 320v-5';
    else minor += 'M' + tx + ' 297v3M' + tx + ' 320v-3';
  }
  add(ticks, major, '#333');
  add(ticks, minor, '#777');
})();
```
